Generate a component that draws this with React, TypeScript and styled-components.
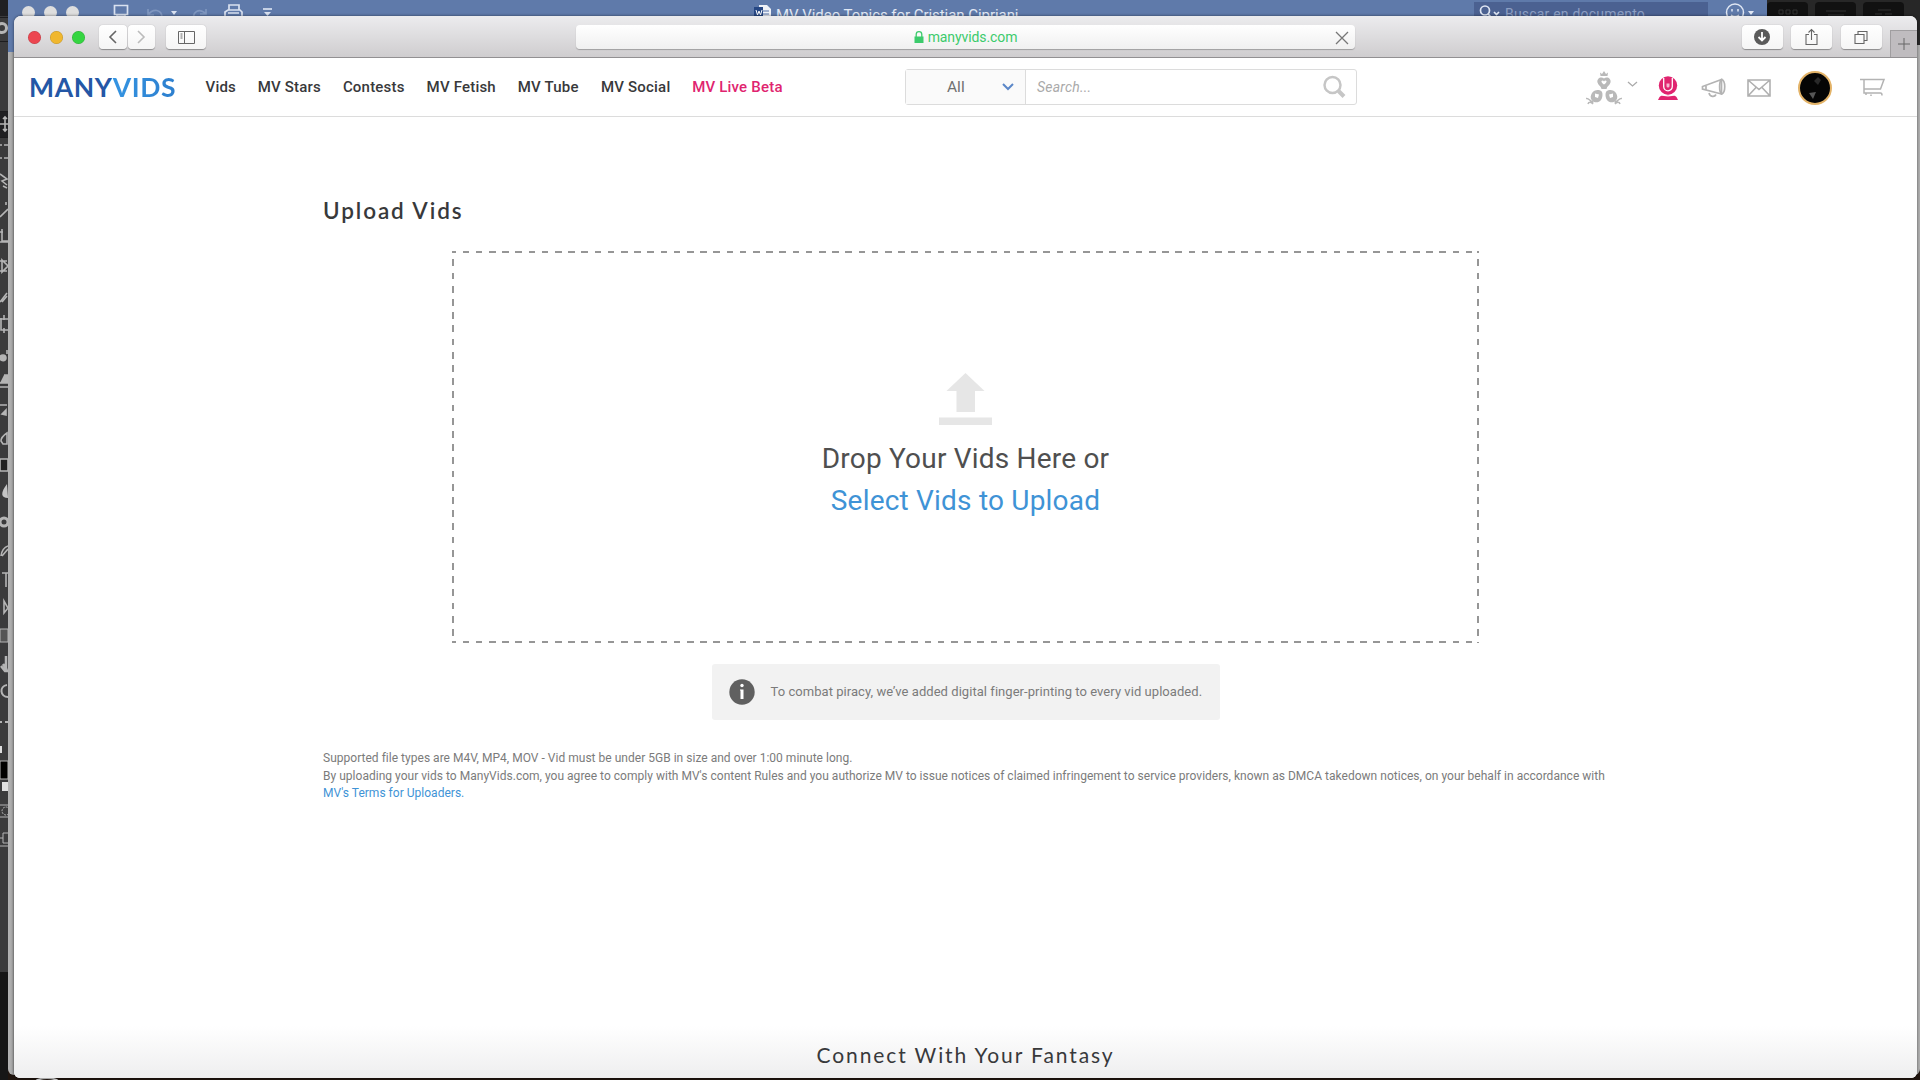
import styled, { createGlobalStyle } from "styled-components";
import type { ReactNode } from "react";

const palette = {
	gray1: "#38393b",
	gray2: "#4f4f4f",
	gray3: "#7b7b7b",
	gray4: "#b9b9b9",
	line: "#dcdcdc",
	blue1: "#2457a6",
	blue2: "#3f93d6",
	pink: "#e0246f",
	green: "#3ccb6c",
	word: "#5f7aaa",
};

type NavLink = { label: string; width: number; hot?: boolean };

const links: NavLink[] = [
	{ label: "Vids", width: 30 },
	{ label: "MV Stars", width: 63 },
	{ label: "Contests", width: 61.5 },
	{ label: "MV Fetish", width: 69 },
	{ label: "MV Tube", width: 61 },
	{ label: "MV Social", width: 69 },
	{ label: "MV Live Beta", width: 90, hot: true },
];

function ToolPalette() {
	return (
		<ToolStrip>
			<svg width="8" height="1080" fill="none" stroke="#b5b5b5" strokeWidth="1.6">
				<path d="M0 0h8v16H0zM0 111h8v26H0z" fill="#202022" stroke="none" />
				<path d="M0 972h8v108H0z" fill="#161616" stroke="none" />
				<path d="M0 17.500h8M0 41.500h8M0 111.500h8M0 137.500h8" stroke="#1c1c1e" strokeWidth="1" />
				<circle cx="2" cy="28" r="4.500" strokeWidth="3" />
				<path d="M0 124h8M5 117v14M3 119l2-2 2 2M3 129l2 2 2-2" />
				<path d="M0 145h2M4 145h4M0 158h2M4 158h4" />
				<path d="M0 174l7 5-5 2 5 4M3 186l4 2M0 217l8-8M6 202v3" />
				<path d="M2 229v12h6M0 232h3M0 242h8M2 260l6 6-6 6zM0 261h7M0 271h7" />
				<path d="M0 302l7-9M2 302l5-6M1 318v12h7M4 315v5M0 319h8M4 328v5" />
				<path d="M0 358c0-4 6-4 6 0s-6 3-6 0zM7 350v4M4 375h4v8H0M0 387h8M0 405h7M2 414l4-4v5z" fill="#b5b5b5" />
				<path d="M1 441c0-4 6-8 6-8v11H3z" />
				<path d="M0 459h8v12H0z" fill="#222" />
				<path d="M7 484c-7 9-6 14 1 14z" fill="#c5c5c5" stroke="none" />
				<circle cx="4" cy="522" r="4" strokeWidth="3" />
				<path d="M1 556c1-7 4-9 7-10M2 556l6-7M2 573h6M6 573v14M4 601v12l4-5z" />
				<path d="M0 629h8v13H0z" fill="#555" strokeWidth="1" />
				<path d="M1 666l4 5h3M3 664l4 6M6 656v14" strokeWidth="2.500" />
				<path d="M7 685c-8 1-7 12 1 12M0 722h2M5 722h3" strokeWidth="2" />
				<path d="M0 746h2v7H0z" fill="#ddd" stroke="none" />
				<path d="M0 761h8v18H0z" fill="#000" strokeWidth="1" />
				<path d="M2 782h6v9H2z" fill="#e0e0e0" stroke="none" />
				<path d="M0 805h8M0 817h8M0 838h3v-5h5M3 838v5h5M0 846h8" strokeWidth="1" />
				<circle cx="6" cy="811" r="4" strokeDasharray="2 1" strokeWidth="1" />
			</svg>
		</ToolStrip>
	);
}

function WordWindow() {
	return (
		<Word>
			<WordBar>
				<WordLights>
					<i />
					<i />
					<i />
				</WordLights>
				<QuickAccess>
					<svg width="170" height="20" fill="none" stroke="#d9e1f0" strokeWidth="1.700">
						<path d="M1.500 14.500v-9h13v9zM4 18v-3h8v3" />
						<path d="M35 9v6h6M35 15c5-7 14-6 14 3M93 9v5h-6M93 14c-7-7-14-2-12 6" stroke="#7f96bf" />
						<path d="M58 11h6l-3 4z" fill="#d9e1f0" stroke="none" />
						<path d="M116 10V5h10v5M112 17v-5l3-2h12l2 2v5M115 13h11" />
						<path d="M150 9h9" />
						<path d="M151 12h7l-3.500 4z" fill="#d9e1f0" stroke="none" />
					</svg>
				</QuickAccess>
				<DocTitle>
					<svg width="17" height="18" viewBox="0 0 17 18">
						<path d="M5 0h8l4 4v14H5z" fill="#eef1f7" />
						<path d="M8 6h7M8 9h7M8 12h7" stroke="#5270a8" />
						<path d="M0 2h9v11H0z" fill="#264784" />
						<path d="M2 5l1.500 5L5 6l1.500 4L8 5" fill="none" stroke="#fff" />
					</svg>
					<span>MV Video Topics for Cristian Cipriani</span>
				</DocTitle>
				<DocSearch>
					<svg width="22" height="16" fill="none" stroke="#dfe6f3" strokeWidth="1.700">
						<circle cx="6" cy="8.500" r="4.500" />
						<path d="M9 12l3 3M15 10l2.500 2.500L20 10" />
					</svg>
					<span>Buscar en documento</span>
				</DocSearch>
				<svg width="32" height="20" fill="none" stroke="#dfe6f3" strokeWidth="1.500">
					<circle cx="10" cy="12.500" r="8.500" />
					<path d="M7 9v2.500M13 9v2.500M6 15c2 2 6 2 8 0" />
					<path d="M23 11h6l-3 4z" fill="#dfe6f3" stroke="none" />
				</svg>
			</WordBar>
		</Word>
	);
}

function Toolbar() {
	return (
		<Chrome>
			<Lights>
				<Light color="#ec4650" />
				<Light color="#f0b72f" />
				<Light color="#35d541" />
			</Lights>
			<ChromeButton $width={27.5} $left={14}>
				<svg width="10" height="14" fill="none" stroke="#666" strokeWidth="1.600">
					<path d="M8 1L2 7l6 6" />
				</svg>
			</ChromeButton>
			<ChromeButton $width={27.5} $left={1}>
				<svg width="10" height="14" fill="none" stroke="#bbb" strokeWidth="1.600">
					<path d="M2 1l6 6-6 6" />
				</svg>
			</ChromeButton>
			<ChromeButton $width={40} $left={11}>
				<svg width="17" height="13" fill="none" stroke="#666">
					<path d="M.5.5h16v12H.5zM6.500.5v12M2.500 3h2M2.500 5h2M2.500 7h2" />
				</svg>
			</ChromeButton>
			<Address>
				<svg width="10" height="12" viewBox="0 0 10 12">
					<path d="M2.200 6V3.500a2.800 2.800 0 0 1 5.600 0V6" fill="none" stroke={palette.green} strokeWidth="1.300" />
					<path d="M.5 5.500h9V12h-9z" fill={palette.green} />
				</svg>
				<span>manyvids.com</span>
				<StopButton>
					<svg width="14" height="14" fill="none" stroke="#777" strokeWidth="1.300">
						<path d="M1 1l12 12M13 1L1 13" />
					</svg>
				</StopButton>
			</Address>
			<ChromeRight>
				<ChromeButton $width={41}>
					<svg width="16" height="16">
						<circle cx="8" cy="8" r="8" fill="#5a5a5a" />
						<path d="M8 3v8.500M4.500 8L8 11.500 11.500 8" fill="none" stroke="#fff" strokeWidth="1.800" />
					</svg>
				</ChromeButton>
				<ChromeButton $width={41}>
					<svg width="13" height="18" fill="none" stroke="#666" strokeWidth="1.100">
						<path d="M4 6.500H1v10h11v-10H9M6.500 12V1.500M3.500 4.500l3-3 3 3" />
					</svg>
				</ChromeButton>
				<ChromeButton $width={41}>
					<svg width="14" height="14" fill="none" stroke="#666" strokeWidth="1.100">
						<path d="M1 4.500h9v9H1zM4 4.500v-3h9v9h-3" />
					</svg>
				</ChromeButton>
			</ChromeRight>
			<NewTab>
				<svg width="12" height="12" stroke="#666">
					<path d="M6 0v12M0 6h12" />
				</svg>
			</NewTab>
		</Chrome>
	);
}

function HeaderIcon({ left, children }: { left: number; children: ReactNode }) {
	return <IconSlot $left={left}>{children}</IconSlot>;
}

function Header() {
	return (
		<Head>
			<Logo>
				MANY<b>VIDS</b>
			</Logo>
			<Nav>
				{links.map((link) => (
					<NavItem key={link.label} $hot={link.hot} $width={link.width}>
						{link.label}
					</NavItem>
				))}
			</Nav>
			<SearchBox>
				<Scope>
					All
					<svg width="12" height="8" fill="none" stroke="#5b87c8" strokeWidth="2">
						<path d="M1 1l5 5 5-5" />
					</svg>
				</Scope>
				<Query>
					Search...
					<svg width="24" height="24" fill="none" stroke="#c6c6c6">
						<circle cx="10.500" cy="10" r="8" strokeWidth="2.500" />
						<path d="M16.500 16l5.500 5.500" strokeWidth="4" />
					</svg>
				</Query>
			</SearchBox>
			<Icons>
				<HeaderIcon left={0}>
					<svg width="36" height="34" viewBox="0 0 36 34" fill={palette.gray4}>
						<path d="M14.500 5L14 1.500l2 1.500 2-3 2 3 2-1.500-.5 3.500z" />
						<path d="M18 7.500c3-2.500 7.500 0 6.500 4-.6 2.800-3.500 3.500-4 6.500h-5c-.5-3-3.400-3.700-4-6.500-1-4 3.500-6.500 6.500-4z" />
						<path d="M6 22c2-3.500 8-4 10-1 1 2 .5 6-1 8-2 3-7 3-9 .5C4 27 4.500 24.500 6 22zM30 22c-2-3.500-8-4-10-1-1 2-.5 6 1 8 2 3 7 3 9 .5 2-2.500 1.500-5 0-7.500z" />
						<path d="M0 27.500c3-1 4 3.500 7.500 3.500M2 33c.5-2.500 3.500-2.500 5 0M36 27.500c-3-1-4 3.500-7.500 3.500M34 33c-.5-2.500-3.500-2.500-5 0" fill="none" stroke={palette.gray4} strokeWidth="1.500" />
						<path d="M15.500 10c1-1 2-.5 2.500.5.500-1 1.500-1.500 2.500-.5.500 1-1 2.500-2.500 3.500-1.500-1-3-2.500-2.500-3.500zM9 22.500l4 1-1 3.500-3-1zM27 22.500l-4 1 1 3.500 3-1z" fill="#fff" />
					</svg>
				</HeaderIcon>
				<HeaderIcon left={5}>
					<Raised>
						<svg width="11" height="7" fill="none" stroke="#aaa" strokeWidth="1.300">
							<path d="M1 1l4.500 4L10 1" />
						</svg>
					</Raised>
				</HeaderIcon>
				<HeaderIcon left={19}>
					<svg width="22" height="24" viewBox="0 0 22 24">
						<circle cx="11" cy="9.500" r="9.200" fill={palette.pink} />
						<path d="M4.500 19.500c4-1 9-1 13 0l2 1.500 1.500 3H1l1.500-3z" fill={palette.pink} />
						<path d="M6.700 2v8.500a4.300 4.300 0 0 0 8.600 0V2" fill="none" stroke="#fff" strokeWidth="1.300" />
						<path d="M9.500 7.500h3V10a1.500 1.500 0 0 1-3 0z" fill="#f7b5d0" />
						<path d="M3 18.700c5 1.400 11 1.400 16 0" fill="none" stroke="#fff" strokeWidth="1.200" />
					</svg>
				</HeaderIcon>
				<HeaderIcon left={22}>
					<svg width="25" height="20" viewBox="0 0 25 20" fill="none" stroke="#b3b3b3" strokeWidth="1.700">
						<path d="M20.500 1.500L1.500 8.500v2.500L20.500 16zM5 7.500v4.500M8 15c1 4 5.500 4.500 7 1.500" />
						<path d="M20.500 1.500c4.300 1 4.300 13.500 0 14.500-2.500-2-2.500-12.500 0-14.500z" />
					</svg>
				</HeaderIcon>
				<HeaderIcon left={21}>
					<svg width="24" height="18" viewBox="0 0 24 18" fill="none" stroke="#b0b0b0" strokeWidth="1.600">
						<path d="M1 1h22v16H1zM1 1l11 9.500L23 1M1 17l8-8.500M23 17l-8-8.500" />
					</svg>
				</HeaderIcon>
				<HeaderIcon left={27}>
					<Avatar>
						<svg width="29" height="29" viewBox="0 0 29 29">
							<path d="M14 8l4-4 3 3-3 5z" fill="#292929" />
							<path d="M9 20l7-1-3 7z" fill="#565656" />
						</svg>
					</Avatar>
				</HeaderIcon>
				<HeaderIcon left={28}>
					<svg width="25" height="20" viewBox="0 0 25 20" fill="none" stroke="#b3b3b3" strokeWidth="1.500">
						<path d="M0 1.500h24l-3.500 9.500H4.500M4 1.500v13.500h16.500c1 0 1.500 1 1.500 2.500M6 15v2M11 16.500v1.500" />
					</svg>
				</HeaderIcon>
			</Icons>
		</Head>
	);
}

function App() {
	return (
		<Desktop>
			<GlobalStyle />
			<ToolPalette />
			<WordWindow />
			<SidePanel>
				<PanelTab>
					<svg width="20" height="8" fill="none" stroke="#333">
						<path d="M1 1h4v4H1zM8 1h4v4H8zM15 1h4v4h-4z" />
					</svg>
				</PanelTab>
				<PanelTab>
					<svg width="20" height="8" stroke="#333">
						<path d="M0 2h20M2 6h16" />
					</svg>
				</PanelTab>
				<PanelTab>
					<svg width="20" height="8" stroke="#333">
						<path d="M4 1h13M1 5h7M11 5h7" />
					</svg>
				</PanelTab>
			</SidePanel>
			<DockPeek />
			<Browser>
				<Toolbar />
				<Header />
				<Page>
					<Title>Upload Vids</Title>
					<DropZone>
						<svg width="53" height="52" viewBox="0 0 53 52" fill="#e6e6e6">
							<path d="M26.500 0l19 18h-9.500v21H17.500V18H7.500zM0 44.500h53V52H0z" />
						</svg>
						<DropText>Drop Your Vids Here or</DropText>
						<SelectLink>Select Vids to Upload</SelectLink>
					</DropZone>
					<Notice>
						<svg width="26" height="26">
							<circle cx="13" cy="13" r="12.700" fill="#606060" />
							<circle cx="13" cy="6.500" r="1.700" fill="#fff" />
							<path d="M11 10.500h3.500V20h-3v-8.500H11z" fill="#fff" />
						</svg>
						<span>To combat piracy, we’ve added digital finger-printing to every vid uploaded.</span>
					</Notice>
					<FinePrint>
						<Small>
							Supported file types are M4V, MP4, MOV - Vid must be under 5GB in size and over 1:00 minute long.
						</Small>
						<Small>
							By uploading your vids to ManyVids.com, you agree to comply with MV's content Rules and you authorize
							MV to issue notices of claimed infringement to service providers, known as DMCA takedown notices, on
							your behalf in accordance with
						</Small>
						<Small $link>MV's Terms for Uploaders.</Small>
					</FinePrint>
				</Page>
				<Footer>Connect With Your Fantasy</Footer>
			</Browser>
		</Desktop>
	);
}

export default App;

const GlobalStyle = createGlobalStyle`
	* {
		box-sizing: border-box;
	}
	body {
		margin: 0;
		overflow: hidden;
		font-family: Roboto, sans-serif;
	}
	svg {
		display: block;
		flex: none;
	}
`;

const Desktop = styled.div`
	position: relative;
	width: 1920px;
	height: 1080px;
	overflow: hidden;
	background: #20150f;
`;

const ToolStrip = styled.aside`
	position: absolute;
	left: 0;
	top: 0;
	width: 8px;
	height: 1077px;
	background: #3b3b3c;
`;

const Word = styled.section`
	position: absolute;
	left: 8px;
	top: 0;
	width: 1912px;
	height: 1075px;
	border-radius: 0 0 6px 6px;
	background: linear-gradient(90deg, #b4b4b4 0, #a9a9a9 4px, #959595 6px, #b0b0b0 12px);
`;

const WordBar = styled.div`
	display: flex;
	align-items: flex-start;
	width: 1759px;
	height: 52px;
	background: ${palette.word};
`;

const WordLights = styled.div`
	display: flex;
	gap: 9px;
	padding: 5.5px 0 0 14px;
	width: 105px;
	i {
		width: 13px;
		height: 13px;
		border-radius: 50%;
		background: #dedede;
	}
`;

const QuickAccess = styled.div`
	width: 641px;
`;

const DocTitle = styled.div`
	display: flex;
	gap: 5px;
	padding-top: 5px;
	width: 720px;
	color: #e1e8f4;
	font-size: 15px;
	line-height: 20px;
	white-space: nowrap;
	span {
		letter-spacing: -0.05px;
	}
`;

const DocSearch = styled.div`
	display: flex;
	gap: 4px;
	width: 234px;
	height: 30px;
	margin: 2px 17px 0 0;
	padding-left: 5px;
	background: #4b6191;
	color: #8d9fc3;
	font-size: 14px;
	line-height: 24px;
	letter-spacing: 0.2px;
	white-space: nowrap;
`;

const SidePanel = styled.aside`
	position: absolute;
	left: 1767px;
	top: 0;
	width: 153px;
	height: 45px;
	display: flex;
	gap: 7px;
	padding-top: 2px;
	background: #272727;
`;

const PanelTab = styled.div`
	display: flex;
	justify-content: center;
	width: 41px;
	height: 30px;
	padding-top: 7px;
	border-radius: 4px;
	background: #111;
`;

const DockPeek = styled.div`
	position: absolute;
	left: 34px;
	top: 1077px;
	width: 26px;
	height: 12px;
	border-radius: 50%;
	border: 2px solid #cfcfcf;
`;

const Browser = styled.main`
	position: absolute;
	left: 14px;
	top: 16px;
	width: 1903px;
	height: 1062px;
	display: flex;
	flex-direction: column;
	border-radius: 7px 7px 6px 6px;
	overflow: hidden;
	background: #fff;
	box-shadow: 0 0 3px rgba(0, 0, 0, 0.55);
`;

const Chrome = styled.div`
	display: flex;
	align-items: flex-start;
	height: 42px;
	padding: 9px 0 0 14px;
	flex: none;
	border-bottom: 1px solid #929092;
	background: linear-gradient(#ececee, #cfcdcf);
`;

const Lights = styled.div`
	display: flex;
	gap: 9px;
	padding-top: 5.5px;
`;

const Light = styled.span<{ color: string }>`
	width: 13px;
	height: 13px;
	border-radius: 50%;
	background: ${(props) => props.color};
	box-shadow: inset 0 0 0 0.5px rgba(0, 0, 0, 0.2);
`;

const ChromeButton = styled.div<{ $width: number; $left?: number }>`
	display: flex;
	align-items: center;
	justify-content: center;
	width: ${(props) => props.$width}px;
	height: 24px;
	margin-left: ${(props) => props.$left ?? 0}px;
	border-radius: 4px;
	background: linear-gradient(#fff, #f5f5f5);
	box-shadow: 0 0.5px 1px rgba(0, 0, 0, 0.35);
`;

const Address = styled.div`
	position: relative;
	display: flex;
	align-items: center;
	justify-content: center;
	gap: 4px;
	width: 779px;
	height: 24px;
	margin-left: 370px;
	border-radius: 4px;
	background: linear-gradient(#fff, #f0f0f0);
	box-shadow: 0 1px 1px rgba(0, 0, 0, 0.25);
	color: ${palette.green};
	font-size: 14px;
	line-height: 26px;
	letter-spacing: -0.1px;
`;

const StopButton = styled.div`
	position: absolute;
	right: 6px;
	top: 6px;
`;

const ChromeRight = styled.div`
	display: flex;
	gap: 8.5px;
	margin-left: auto;
`;

const NewTab = styled.div`
	display: flex;
	align-items: center;
	justify-content: center;
	width: 27px;
	height: 27px;
	margin: 5px 0 0 8.5px;
	border: 1px solid #a09ea0;
	border-width: 1px 0 0 1px;
	background: #bfbcbf;
`;

const Head = styled.header`
	display: flex;
	align-items: center;
	height: 59px;
	flex: none;
	padding-left: 15px;
	border-bottom: 1px solid ${palette.line};
`;

const Logo = styled.div`
	width: 176.5px;
	font-family: Lato, sans-serif;
	font-weight: 700;
	font-size: 26.5px;
	line-height: 32px;
	letter-spacing: 0.65px;
	color: ${palette.blue1};
	b {
		font-weight: 700;
		color: transparent;
		background: linear-gradient(90deg, #3494e2, #2d7fce);
		background-clip: text;
	}
`;

const Nav = styled.nav`
	display: flex;
	gap: 22.2px;
	width: 699.5px;
`;

const NavItem = styled.a<{ $hot?: boolean; $width: number }>`
	width: ${(props) => props.$width}px;
	font-weight: 500;
	font-size: 15px;
	line-height: 20px;
	letter-spacing: 0.2px;
	white-space: nowrap;
	color: ${(props) => (props.$hot ? palette.pink : palette.gray1)};
`;

const SearchBox = styled.div`
	display: flex;
	width: 452px;
	height: 36px;
	border: 1px solid ${palette.line};
	border-radius: 3px;
`;

const Scope = styled.div`
	display: flex;
	align-items: center;
	justify-content: space-between;
	width: 120px;
	padding: 0 11px 0 41px;
	border-right: 1px solid ${palette.line};
	background: #fafafa;
	color: #707070;
	font-size: 15.5px;
`;

const Query = styled.div`
	display: flex;
	flex: 1;
	align-items: center;
	justify-content: space-between;
	padding: 0 10px 0 11px;
	color: #aaa;
	font-size: 14px;
	letter-spacing: 0.2px;
	font-style: italic;
`;

const Icons = styled.div`
	display: flex;
	align-items: center;
	margin-left: 229px;
	padding-top: 1px;
`;

const IconSlot = styled.div<{ $left: number }>`
	margin-left: ${(props) => props.$left}px;
`;

const Raised = styled.div`
	padding-bottom: 6px;
`;

const Avatar = styled.div`
	width: 34px;
	height: 34px;
	border: 2px solid #e3b368;
	border-radius: 50%;
	background: #050505;
`;

const Page = styled.section`
	display: flex;
	flex-direction: column;
	flex: 1;
	padding: 80px 309px 0;
`;

const Title = styled.h1`
	margin: 0;
	font-family: Lato, sans-serif;
	font-weight: 600;
	font-size: 22.5px;
	line-height: 28px;
	letter-spacing: 1.9px;
	color: ${palette.gray1};
`;

const dashH = "repeating-linear-gradient(90deg, #969696 0 4px, transparent 4px 10.6px, #969696 10.6px 13.2px)";
const dashV = "repeating-linear-gradient(180deg, #969696 0 2px, transparent 2px 8.4px, #969696 8.4px 13.2px)";

const DropZone = styled.div`
	display: flex;
	flex-direction: column;
	align-items: center;
	align-self: center;
	width: 1027px;
	height: 392px;
	margin-top: 26px;
	padding-top: 122px;
	background:
		${dashH} top / 100% 2px no-repeat,
		${dashH} bottom / 100% 2px no-repeat,
		${dashV} left / 2px 100% no-repeat,
		${dashV} right / 2px 100% no-repeat;
`;

const DropText = styled.div`
	margin-top: 12px;
	font-size: 28px;
	line-height: 43px;
	letter-spacing: 0.2px;
	color: ${palette.gray2};
`;

const SelectLink = styled.a`
	font-size: 28px;
	line-height: 42px;
	letter-spacing: 0.2px;
	color: ${palette.blue2};
`;

const Notice = styled.div`
	display: flex;
	align-self: center;
	gap: 16px;
	width: 508px;
	height: 56px;
	margin-top: 21px;
	padding: 15px 0 0 17px;
	border-radius: 3px;
	background: #f2f2f2;
	color: ${palette.gray3};
	font-size: 13px;
	line-height: 25px;
	letter-spacing: 0.05px;
	white-space: nowrap;
`;

const FinePrint = styled.div`
	margin-top: 30px;
`;

const Small = styled.p<{ $link?: boolean }>`
	margin: 0;
	font-size: 12px;
	line-height: 17.6px;
	letter-spacing: 0.02px;
	white-space: nowrap;
	color: ${(props) => (props.$link ? palette.blue2 : palette.gray3)};
`;

const Footer = styled.footer`
	height: 52px;
	flex: none;
	padding-top: 14px;
	text-align: center;
	font-family: Lato, sans-serif;
	font-size: 21px;
	line-height: 30px;
	letter-spacing: 1.9px;
	color: ${palette.gray1};
	background: linear-gradient(#fff, #eeeeef);
`;
